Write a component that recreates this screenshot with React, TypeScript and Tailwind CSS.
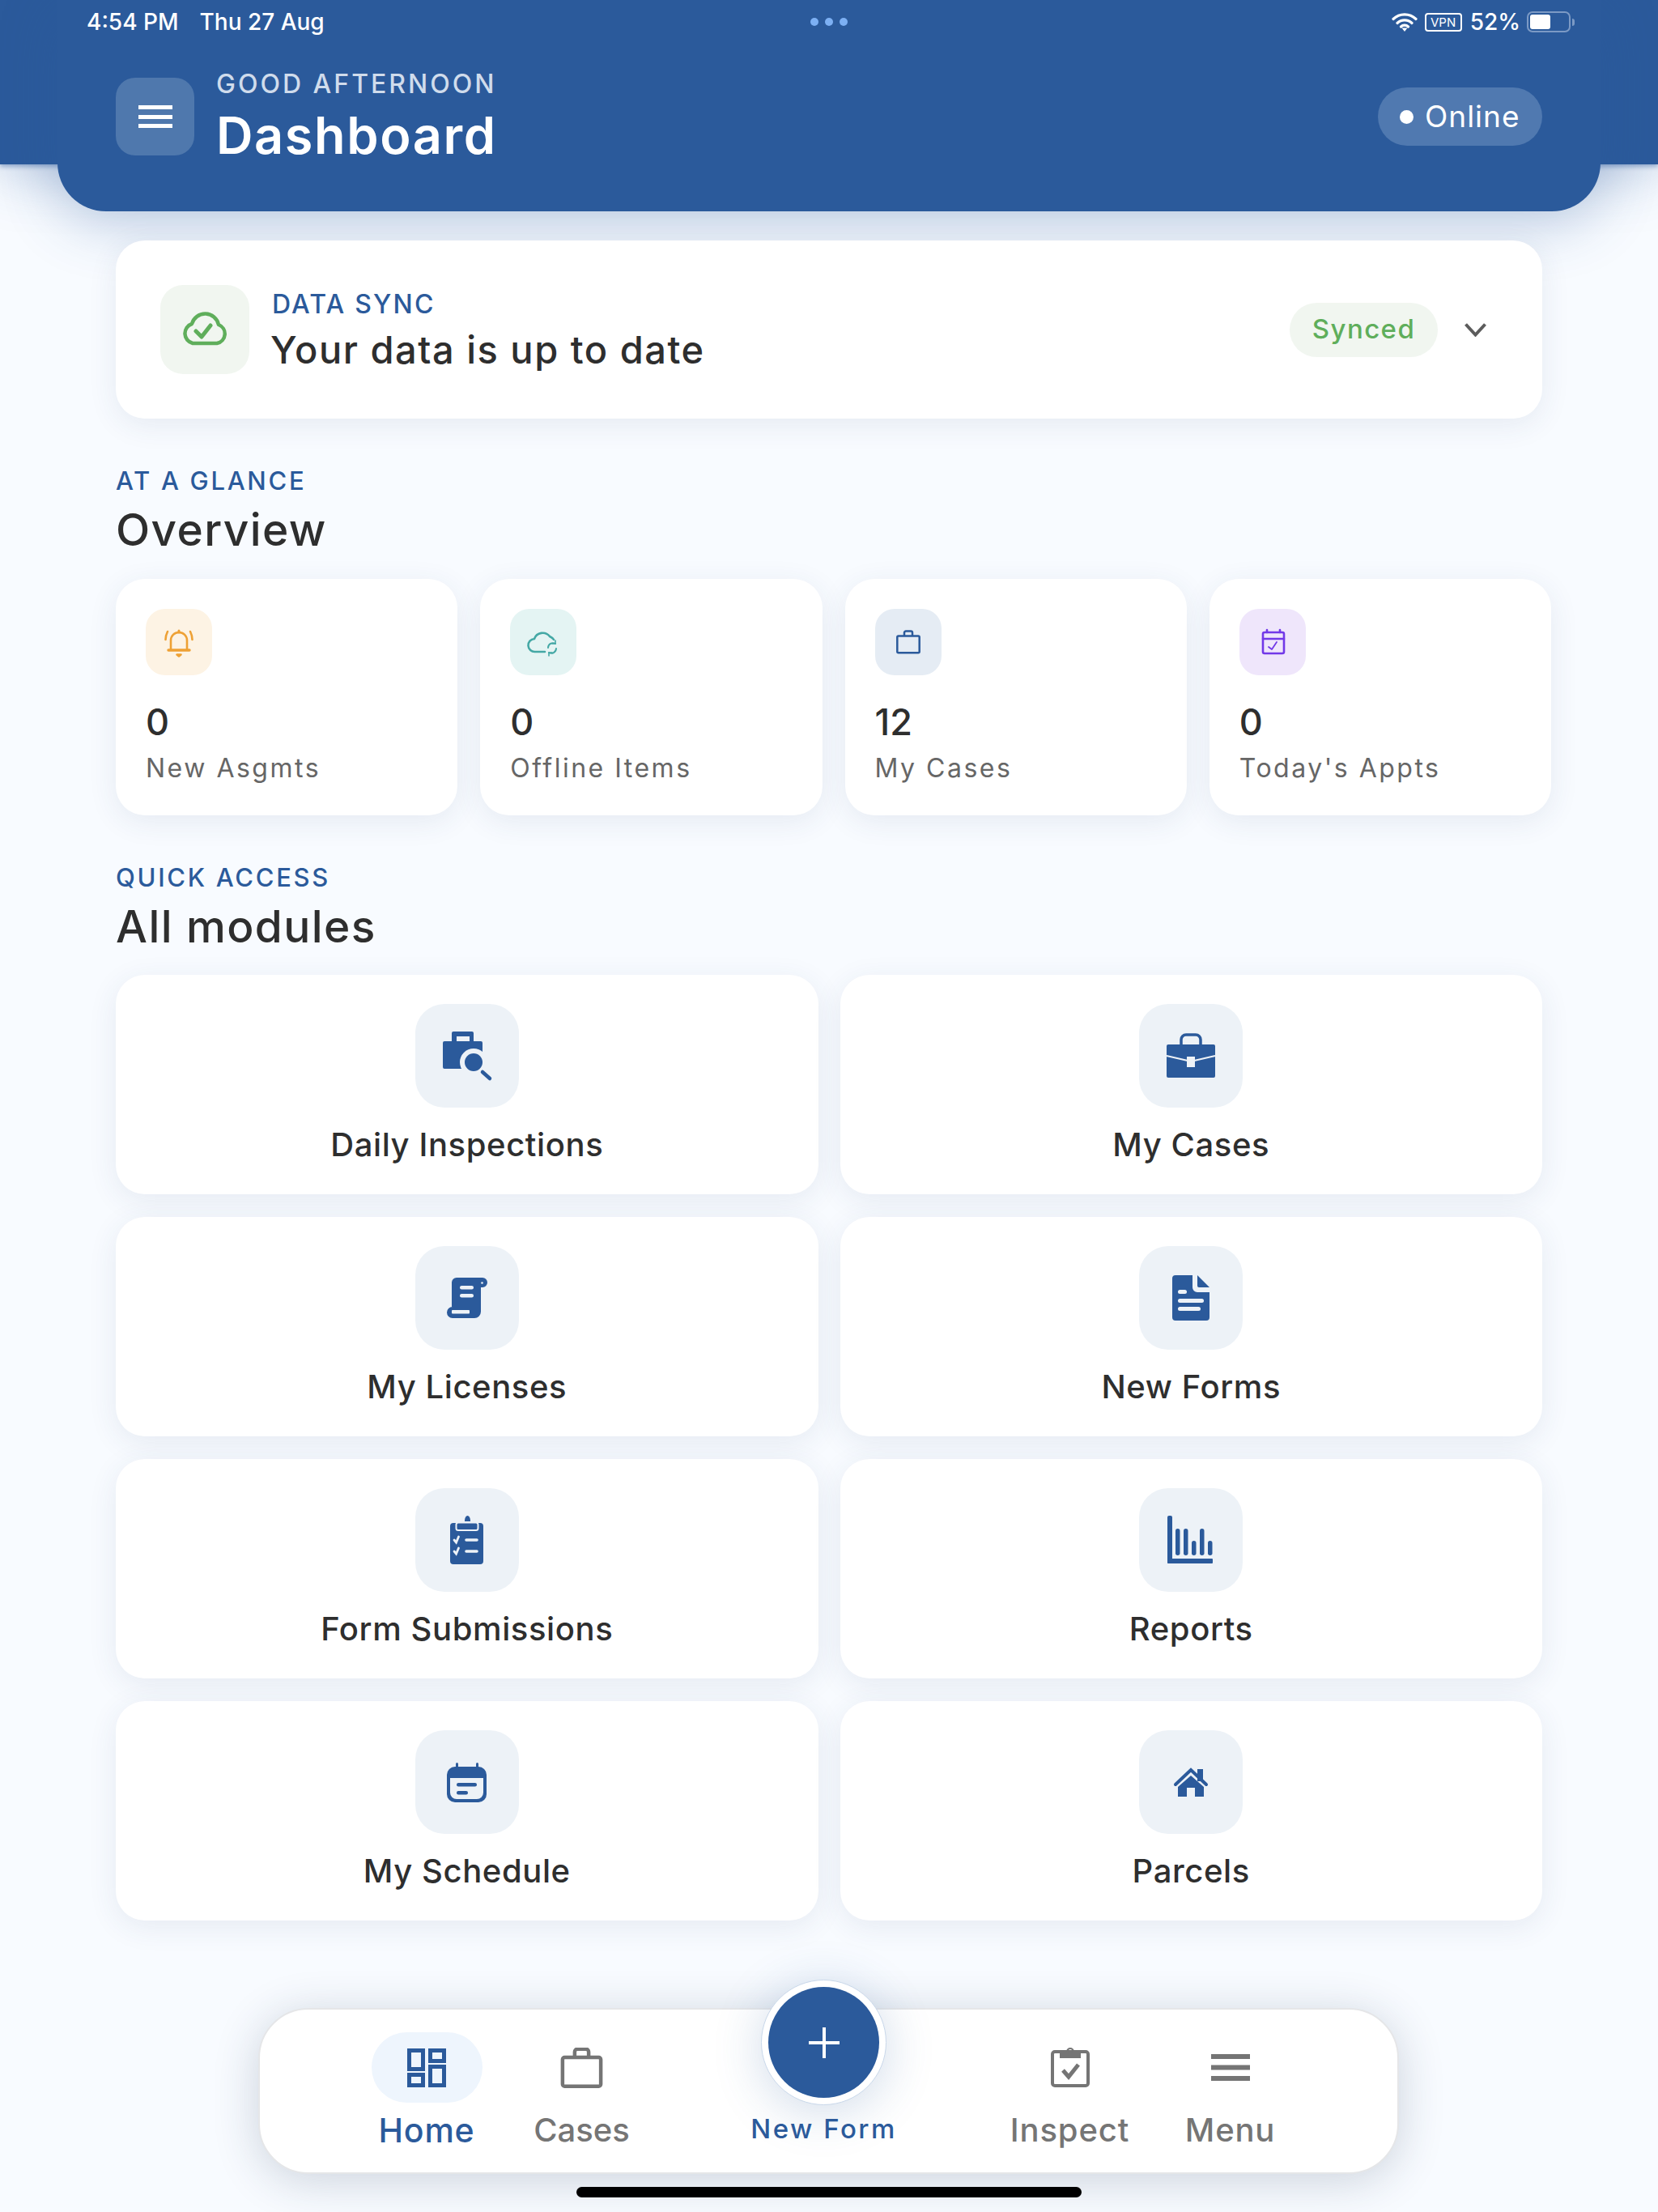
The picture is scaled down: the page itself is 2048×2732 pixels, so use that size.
const BLUE = "#2b5a9b";
const TILE = "#edf2f7";

function DailyIcon() {
  return (
    <svg viewBox="0 0 128 128" className="h-full w-full">
      <path fill={BLUE} fillRule="evenodd" d="M47 34h23a2 2 0 0 1 2 2v10h9a2 2 0 0 1 2 2v30a2 2 0 0 1-2 2H36a2 2 0 0 1-2-2V48a2 2 0 0 1 2-2h9V36a2 2 0 0 1 2-2Zm4 6v6h16v-6Z" />
      <circle cx="72" cy="72" r="17" fill={TILE} />
      <circle cx="72" cy="72" r="11" fill={BLUE} />
      <path d="M83 84l9 8" stroke={BLUE} strokeWidth="4.5" strokeLinecap="round" />
    </svg>
  );
}

function CaseIcon() {
  return (
    <svg viewBox="0 0 128 128" className="h-full w-full">
      <path d="M52 50v-6a6 6 0 0 1 6-6h12a6 6 0 0 1 6 6v6" fill="none" stroke={BLUE} strokeWidth="3.5" />
      <rect x="34" y="50" width="60" height="41" rx="2" fill={BLUE} />
      <path d="M34 64l26 6M94 64l-26 6" stroke={TILE} strokeWidth="2.2" />
      <rect x="59" y="65" width="10" height="13" fill={TILE} />
    </svg>
  );
}

function LicenseIcon() {
  return (
    <svg viewBox="0 0 128 128" className="h-full w-full">
      <path fill={BLUE} d="M51 39h32a6 6 0 0 1 0 12h-2v30a8 8 0 0 1-8 8H46a7 7 0 0 1 0-14h-1V45a6 6 0 0 1 6-6Z" />
      <g fill={TILE}>
        <rect x="55" y="49" width="17" height="4.5" rx="2.2" />
        <rect x="55" y="59" width="17" height="4.5" rx="2.2" />
        <rect x="45" y="79" width="22" height="4.5" rx="1" />
        <circle cx="82.5" cy="45.5" r="1.3" />
      </g>
    </svg>
  );
}

function FormIcon() {
  return (
    <svg viewBox="0 0 128 128" className="h-full w-full">
      <path fill={BLUE} d="M45 36h21v15a6 6 0 0 0 6 6h15v31a4 4 0 0 1-4 4H45a4 4 0 0 1-4-4V40a4 4 0 0 1 4-4Z" />
      <path fill={BLUE} d="M72 36l15 15H74a2 2 0 0 1-2-2Z" />
      <g fill={TILE}>
        <rect x="48" y="54" width="11" height="5" rx="2.5" />
        <rect x="48" y="65" width="32" height="5" rx="2.5" />
        <rect x="48" y="75" width="28" height="5" rx="2.5" />
      </g>
    </svg>
  );
}

function SubmissionIcon() {
  return (
    <svg viewBox="0 0 128 128" className="h-full w-full">
      <path fill={BLUE} d="M61 40a3.5 6 0 0 1 7 0v1h-7Z" />
      <rect x="43" y="43" width="41" height="51" rx="4" fill={BLUE} />
      <rect x="50.5" y="42.5" width="27" height="9.5" rx="2.5" fill={BLUE} stroke={TILE} strokeWidth="2" />
      <g fill="none" stroke={TILE} strokeLinecap="round">
        <path d="M48 64l2.5 3 3-7M48 78l2.5 3 3-7" strokeWidth="2.8" />
        <path d="M63 64h13M63 78h13" strokeWidth="3.6" />
      </g>
    </svg>
  );
}

function ReportIcon() {
  return (
    <svg viewBox="0 0 128 128" className="h-full w-full">
      <g fill={BLUE}>
        <rect x="35" y="34" width="6" height="59" rx="2" />
        <rect x="35" y="87" width="56" height="6" rx="1" />
        <rect x="45" y="50" width="5.5" height="33" rx="2.7" />
        <rect x="55" y="50" width="5.5" height="33" rx="2.7" />
        <rect x="65" y="65" width="5.5" height="18" rx="2.7" />
        <rect x="75" y="50" width="5.5" height="33" rx="2.7" />
        <rect x="85" y="65" width="5.5" height="18" rx="2.7" />
      </g>
    </svg>
  );
}

function ScheduleIcon() {
  return (
    <svg viewBox="0 0 128 128" className="h-full w-full">
      <rect x="50" y="40" width="3" height="8" rx="1.5" fill={BLUE} />
      <rect x="75" y="40" width="3" height="8" rx="1.5" fill={BLUE} />
      <rect x="39" y="45" width="49" height="44" rx="10" fill={BLUE} />
      <path fill={TILE} d="M43 59h41v18a8 8 0 0 1-8 8H51a8 8 0 0 1-8-8Z" />
      <rect x="51" y="65" width="25" height="4.5" rx="2.2" fill={BLUE} />
      <rect x="51" y="75" width="14" height="4.5" rx="2.2" fill={BLUE} />
    </svg>
  );
}

function ParcelIcon() {
  return (
    <svg viewBox="0 0 128 128" className="h-full w-full">
      <rect x="72" y="48" width="7" height="15" fill={BLUE} />
      <path d="M45 67l19-18 19 18" fill="none" stroke={BLUE} strokeWidth="4" strokeLinecap="round" />
      <path fill={BLUE} d="M64 56l16 14v12H69V71H59v11H48V70Z" />
    </svg>
  );
}

function BellIcon() {
  return (
    <svg viewBox="0 0 82 82" className="h-full w-full" fill="none" stroke="#eea135" strokeWidth="2.6" strokeLinecap="round" strokeLinejoin="round">
      <path d="M31 50V39a10 10 0 0 1 20 0v11" />
      <path d="M28 51h26" strokeWidth="3.4" />
      <path d="M41 27v2" strokeWidth="3" />
      <path d="M38.5 56.5h5l-2.5 2Z" fill="#eea135" />
      <path d="M27 28c-1.5 3-2.5 6-2.5 10M55 28c1.5 3 2.5 6 2.5 10" />
    </svg>
  );
}

function CloudSyncIcon() {
  return (
    <svg viewBox="0 0 82 82" className="h-full w-full" fill="none" stroke="#44a8a5" strokeLinecap="round">
      <path d="M43 53H31a8 8 0 0 1-1-16 11 11 0 0 1 19-3c2 1 4 2 5 4" strokeWidth="2.6" />
      <path d="M47 48a6 6 0 0 1 9-5M57 49a6 6 0 0 1-9 5" strokeWidth="2" />
      <path d="M56 39v4h-4M48 58v-4h4" strokeWidth="1.6" />
    </svg>
  );
}

function BagIcon({ color, width }: { color: string; width: number }) {
  return (
    <svg viewBox="0 0 30 29" className="h-full w-full" fill="none" stroke={color} strokeWidth={width} strokeLinejoin="round">
      <rect x="1.3" y="7" width="27.4" height="20.7" rx="1.5" />
      <path d="M10 7V3a2 2 0 0 1 2-2h6a2 2 0 0 1 2 2v4" />
    </svg>
  );
}

function ApptIcon() {
  return (
    <svg viewBox="0 0 82 82" className="h-full w-full" fill="none" stroke="#7239e8" strokeWidth="2.6" strokeLinecap="round" strokeLinejoin="round">
      <rect x="29" y="29" width="26" height="26" rx="2" />
      <path d="M29 37h26M34 26v3M50 26v3" />
      <path d="M36 47l4 3 6-9" strokeWidth="1.8" />
    </svg>
  );
}

const stats = [
  { value: "0", label: "New Asgmts", tile: "bg-[#fdf3e4]", icon: <BellIcon /> },
  { value: "0", label: "Offline Items", tile: "bg-[#e4f4f3]", icon: <CloudSyncIcon /> },
  {
    value: "12",
    label: "My Cases",
    tile: "bg-[#e5ecf4]",
    icon: (
      <div className="flex h-full w-full items-center justify-center">
        <div className="h-[30px] w-[30px]">
          <BagIcon color={BLUE} width={2.5} />
        </div>
      </div>
    ),
  },
  { value: "0", label: "Today's Appts", tile: "bg-[#efe6fb]", icon: <ApptIcon /> },
];

const modules = [
  { label: "Daily Inspections", icon: <DailyIcon /> },
  { label: "My Cases", icon: <CaseIcon /> },
  { label: "My Licenses", icon: <LicenseIcon /> },
  { label: "New Forms", icon: <FormIcon /> },
  { label: "Form Submissions", icon: <SubmissionIcon /> },
  { label: "Reports", icon: <ReportIcon /> },
  { label: "My Schedule", icon: <ScheduleIcon /> },
  { label: "Parcels", icon: <ParcelIcon /> },
];

function SectionTitle({ kicker, title }: { kicker: string; title: string }) {
  return (
    <>
      <p className="mt-[59px] h-[36px] text-[31px] leading-[36px] font-medium tracking-[2.7px] text-[#2b5a9b]">{kicker}</p>
      <h2 className="mt-[10px] h-[64px] text-[55px] leading-[64px] font-medium tracking-[1.4px] text-[#2e2e2e]">{title}</h2>
    </>
  );
}

function StatusBar() {
  return (
    <div className="grid h-[54px] grid-cols-[1fr_auto_1fr] items-center px-[36px] text-[28px] font-medium text-white">
      <div className="flex gap-[26px]">
        <span>4:54 PM</span>
        <span>Thu 27 Aug</span>
      </div>
      <div className="flex gap-[8px]">
        <span className="h-[10px] w-[10px] rounded-full bg-[#7db0f3]" />
        <span className="h-[10px] w-[10px] rounded-full bg-[#7db0f3]" />
        <span className="h-[10px] w-[10px] rounded-full bg-[#7db0f3]" />
      </div>
      <div className="mr-[-4px] flex items-center justify-end">
        <svg viewBox="0 0 32 24" className="h-[24px] w-[32px]" fill="none" stroke="white" strokeWidth="3.2" strokeLinecap="round">
          <path d="M2 8.5a20 20 0 0 1 28 0M7 13.5a13 13 0 0 1 18 0M11.5 18a6.500 6.500 0 0 1 9 0" />
          <path d="M16 24l-3.5-4.5h7Z" fill="white" stroke="none" />
        </svg>
        <div className="ml-[9px] flex h-[23px] w-[46px] items-center justify-center rounded-[4px] border-2 border-white text-[15px] leading-none font-normal">VPN</div>
        <span className="ml-[10px]">52%</span>
        <div className="ml-[8px] flex h-[26px] w-[54px] items-center rounded-[7px] border-2 border-[#7c9ac5] p-[2px]">
          <div className="h-full w-[25px] rounded-[3px] bg-white" />
        </div>
        <div className="ml-[2px] h-[9px] w-[3px] rounded-r-full bg-[#7c9ac5]" />
      </div>
    </div>
  );
}

function Header() {
  return (
    <header className="h-[203px] bg-[#2b5a9b] shadow-[0_3px_5px_rgba(43,90,155,0.4),0_8px_70px_rgba(43,90,155,0.34)]">
      <div className="mx-[71px] h-[261px] rounded-b-[60px] bg-[#2b5a9b] shadow-[0_14px_70px_rgba(43,90,155,0.3)]">
        <StatusBar />
        <div className="mt-[42px] flex h-[96px] items-center px-[72px]">
          <button className="flex h-[96px] w-[97px] items-center justify-center rounded-[24px] bg-[#4f78ad]">
            <svg viewBox="0 0 42 28" className="h-[28px] w-[42px]" fill="white">
              <rect y="0" width="42" height="5" />
              <rect y="12" width="42" height="5" />
              <rect y="23" width="42" height="5" />
            </svg>
          </button>
          <div className="ml-[27px] flex-1">
            <p className="text-[32px] leading-[36px] font-medium tracking-[3px] text-[#d0dcec]">GOOD AFTERNOON</p>
            <h1 className="mt-[10px] text-[63px] leading-[70px] font-semibold tracking-[1.6px] text-white">Dashboard</h1>
          </div>
          <div className="flex h-[72px] w-[203px] items-center gap-[14px] rounded-full bg-[#5079b0] pl-[27px] text-[37px] tracking-[1px] text-white">
            <span className="h-[17px] w-[17px] rounded-full bg-white" />
            Online
          </div>
        </div>
      </div>
    </header>
  );
}

function SyncCard() {
  return (
    <section className="flex h-[220px] items-center rounded-[36px] bg-white pr-[69px] pl-[55px] shadow-[0_8px_36px_rgba(43,70,110,0.09)]">
      <div className="flex h-[110px] w-[110px] items-center justify-center rounded-[28px] bg-[#f1f6f0]">
        <svg viewBox="0 0 110 110" className="h-full w-full" fill="none" stroke="#5fae5b" strokeWidth="4.5" strokeLinejoin="round" strokeLinecap="round">
          <path d="M40 72h30a12 12 0 0 0 2-23 17 17 0 0 0-33-1 12.500 12.500 0 0 0 1 24Z" />
          <path d="M44 57l7 7 11-14" strokeWidth="5" />
        </svg>
      </div>
      <div className="ml-[28px] flex-1">
        <p className="mt-[1px] text-[32px] leading-[40px] font-medium tracking-[2.2px] text-[#2b5a9b]">DATA SYNC</p>
        <p className="mt-[8px] -ml-[2px] text-[47px] leading-[56px] font-medium tracking-[1.5px] text-[#2e2e2e]">Your data is up to date</p>
      </div>
      <div className="flex h-[67px] w-[183px] items-center justify-center rounded-full bg-[#f1f6f0] text-[33px] font-medium tracking-[1.4px] text-[#5fae5b]">Synced</div>
      <svg viewBox="0 0 27 17" className="ml-[33px] h-[17px] w-[27px]" fill="none" stroke="#5c5c5c" strokeWidth="4">
        <path d="M1.500 1.500L13.500 14.500L25.500 1.500" />
      </svg>
    </section>
  );
}

function StatCard({ stat }: { stat: (typeof stats)[number] }) {
  return (
    <div className="h-[292px] rounded-[36px] bg-white pt-[37px] pl-[37px] shadow-[0_8px_36px_rgba(43,70,110,0.09)]">
      <div className={`h-[82px] w-[82px] rounded-[24px] ${stat.tile}`}>{stat.icon}</div>
      <p className="mt-[33px] h-[50px] text-[45px] leading-[50px] font-medium text-[#2e2e2e]">{stat.value}</p>
      <p className="mt-[12px] h-[40px] text-[32px] leading-[40px] tracking-[2.5px] text-[#666666]">{stat.label}</p>
    </div>
  );
}

function ModuleCard({ module }: { module: (typeof modules)[number] }) {
  return (
    <div className="flex h-[271px] flex-col items-center rounded-[36px] bg-white pt-[36px] shadow-[0_8px_36px_rgba(43,70,110,0.09)]">
      <div className="h-[128px] w-[128px] rounded-[36px] bg-[#edf2f7]">{module.icon}</div>
      <p className="mt-[21px] h-[50px] text-[40px] leading-[50px] font-medium tracking-[0.6px] text-[#2e2e2e]">{module.label}</p>
    </div>
  );
}

function BottomNav() {
  return (
    <nav className="mt-[108px] ml-[319px] flex h-[205px] w-[1409px] rounded-[62px] border-2 border-[#e5e6e8] bg-white pl-[106px] shadow-[0_8px_56px_rgba(30,50,80,0.2)]">
      <div className="flex w-[200px] flex-col items-center pt-[28px]">
        <div className="flex h-[87px] w-[137px] items-center justify-center rounded-full bg-[#eef5fd]">
          <svg viewBox="0 0 48 48" className="h-[48px] w-[48px]" fill="none" stroke="#2b5a9b" strokeWidth="5">
            <rect x="2.5" y="2.5" width="17" height="23" />
            <rect x="28.5" y="2.5" width="17" height="13" />
            <rect x="2.5" y="32.5" width="17" height="13" />
            <rect x="28.5" y="22.5" width="17" height="23" />
          </svg>
        </div>
        <span className="mt-[9px] text-[41px] leading-[50px] font-medium tracking-[0.8px] text-[#2b5a9b]">Home</span>
      </div>
      <div className="flex w-[183px] flex-col items-center pt-[28px]">
        <div className="flex h-[87px] items-center">
          <div className="h-[50px] w-[53px]">
            <BagIcon color="#757575" width={2.6} />
          </div>
        </div>
        <span className="mt-[9px] text-[40px] leading-[50px] font-medium text-[#757575]">Cases</span>
      </div>
      <div className="flex w-[415px] flex-col items-center">
        <div className="-mt-[37px] flex h-[155px] w-[155px] items-center justify-center rounded-full border border-[#c9d8ea] bg-white shadow-[0_8px_60px_rgba(43,90,155,0.22)]">
          <div className="flex h-[137px] w-[137px] items-center justify-center rounded-full bg-[#2b5a9b]">
            <svg viewBox="0 0 38 38" className="h-[38px] w-[38px]" stroke="white" strokeWidth="4">
              <path d="M19 0v38M0 19h38" />
            </svg>
          </div>
        </div>
        <span className="mt-[9px] text-[33px] leading-[40px] font-medium tracking-[2.5px] text-[#2b5a9b]">New Form</span>
      </div>
      <div className="flex w-[193px] flex-col items-center pt-[28px]">
        <div className="flex h-[87px] items-center">
          <svg viewBox="0 0 48 52" className="-mt-[4px] h-[52px] w-[48px]" fill="none" stroke="#757575">
            <rect x="2" y="8" width="44" height="42" rx="3" strokeWidth="4" />
            <path fill="#757575" stroke="none" d="M11 8h8a5 5 0 0 1 10 0h8v8H11Zm13-3a2.500 2.500 0 1 0 0 5 2.500 2.500 0 0 0 0-5Z" />
            <path d="M15 31l7 8 12-15" strokeWidth="5" />
          </svg>
        </div>
        <span className="mt-[9px] text-[40px] leading-[50px] font-medium tracking-[0.9px] text-[#757575]">Inspect</span>
      </div>
      <div className="flex w-[203px] flex-col items-center pt-[28px]">
        <div className="flex h-[87px] items-center">
          <svg viewBox="0 0 48 33" className="h-[33px] w-[48px]" fill="#757575">
            <rect y="0" width="48" height="6" />
            <rect y="13.5" width="48" height="6" />
            <rect y="27" width="48" height="6" />
          </svg>
        </div>
        <span className="mt-[9px] text-[40px] leading-[50px] font-medium tracking-[0.8px] text-[#757575]">Menu</span>
      </div>
    </nav>
  );
}

export default function App() {
  return (
    <div className="h-[2732px] w-[2048px] overflow-hidden bg-[#f8fbff] font-['Inter',sans-serif]">
      <Header />
      <main className="mt-[94px] px-[143px]">
        <SyncCard />
        <SectionTitle kicker="AT A GLANCE" title="Overview" />
        <div className="mt-[29px] grid w-[1773px] grid-cols-4 gap-[28px]">
          {stats.map((stat) => (
            <StatCard key={stat.label} stat={stat} />
          ))}
        </div>
        <SectionTitle kicker="QUICK ACCESS" title="All modules" />
        <div className="mt-[28px] grid grid-cols-2 gap-x-[27px] gap-y-[28px]">
          {modules.map((module) => (
            <ModuleCard key={module.label} module={module} />
          ))}
        </div>
      </main>
      <BottomNav />
      <div className="mx-auto mt-[16px] h-[13px] w-[624px] rounded-full bg-black" />
    </div>
  );
}
